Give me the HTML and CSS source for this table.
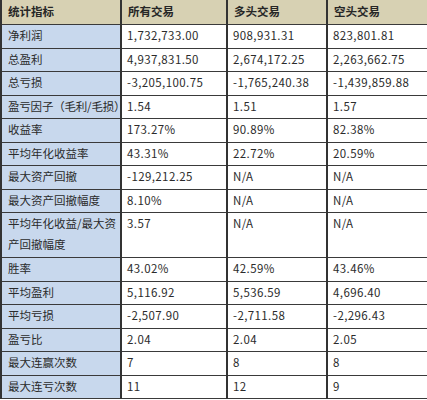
FILE: index.html
```html
<!DOCTYPE html>
<html lang="zh-CN">
<head>
<meta charset="utf-8">
<title>统计指标</title>
<link rel="stylesheet" href="styles.css">
</head>
<body>
<table class="stats">
  <colgroup>
    <col class="c-name">
    <col class="c-all">
    <col class="c-long">
    <col class="c-short">
  </colgroup>
  <thead>
    <tr class="head-row">
      <th>统计指标</th>
      <th>所有交易</th>
      <th>多头交易</th>
      <th>空头交易</th>
    </tr>
  </thead>
  <tbody>
    <tr><th>净利润</th><td>1,732,733.00</td><td>908,931.31</td><td>823,801.81</td></tr>
    <tr><th>总盈利</th><td>4,937,831.50</td><td>2,674,172.25</td><td>2,263,662.75</td></tr>
    <tr><th>总亏损</th><td>-3,205,100.75</td><td>-1,765,240.38</td><td>-1,439,859.88</td></tr>
    <tr><th class="oneline">盈亏因子（毛利/毛损）</th><td>1.54</td><td>1.51</td><td>1.57</td></tr>
    <tr><th>收益率</th><td>173.27%</td><td>90.89%</td><td>82.38%</td></tr>
    <tr><th>平均年化收益率</th><td>43.31%</td><td>22.72%</td><td>20.59%</td></tr>
    <tr><th>最大资产回撤</th><td>-129,212.25</td><td>N/A</td><td>N/A</td></tr>
    <tr><th>最大资产回撤幅度</th><td>8.10%</td><td>N/A</td><td>N/A</td></tr>
    <tr class="tall"><th>平均年化收益/最大资产回撤幅度</th><td>3.57</td><td>N/A</td><td>N/A</td></tr>
    <tr><th>胜率</th><td>43.02%</td><td>42.59%</td><td>43.46%</td></tr>
    <tr><th>平均盈利</th><td>5,116.92</td><td>5,536.59</td><td>4,696.40</td></tr>
    <tr><th>平均亏损</th><td>-2,507.90</td><td>-2,711.58</td><td>-2,296.43</td></tr>
    <tr><th>盈亏比</th><td>2.04</td><td>2.04</td><td>2.05</td></tr>
    <tr><th>最大连赢次数</th><td>7</td><td>8</td><td>8</td></tr>
    <tr><th>最大连亏次数</th><td>11</td><td>12</td><td>9</td></tr>
  </tbody>
</table>
</body>
</html>
```
FILE: styles.css
```css
html, body {
  margin: 0;
  padding: 0;
  background: #ffffff;
}

.stats {
  width: 427px;
  table-layout: fixed;
  border-collapse: collapse;
  font-family: "Noto Sans CJK SC", "Noto Sans", sans-serif;
  font-size: 11.5px;
  color: #2b2b2b;
  margin-top: -1px;
}

.c-name { width: 120px; }
.c-all { width: 106px; }
.c-long { width: 100px; }
.c-short { width: 101px; }

.stats th,
.stats td {
  border-left: 2px solid #333333;
  border-right: 2px solid #333333;
  border-top: 1px solid #3a3a3a;
  border-bottom: 1px solid #3a3a3a;
  padding: 0 2px 0 6px;
  line-height: 21px;
  vertical-align: top;
  text-align: left;
  font-weight: normal;
  white-space: normal;
}

.stats td {
  padding-left: 5px;
}

.head-row {
  height: 25px;
}

.head-row th {
  background: #d7d1b3;
  font-weight: bold;
  color: #262626;
  padding-top: 1px;
}

.stats tbody tr {
  height: 23.5px;
}

.stats tbody tr.tall {
  height: 45px;
}

.stats tbody th {
  background: #c8d8ed;
}

.stats tbody th.oneline {
  white-space: nowrap;
  letter-spacing: -0.2px;
}

.stats tbody td {
  background: #ffffff;
  letter-spacing: 0.4px;
}
```
